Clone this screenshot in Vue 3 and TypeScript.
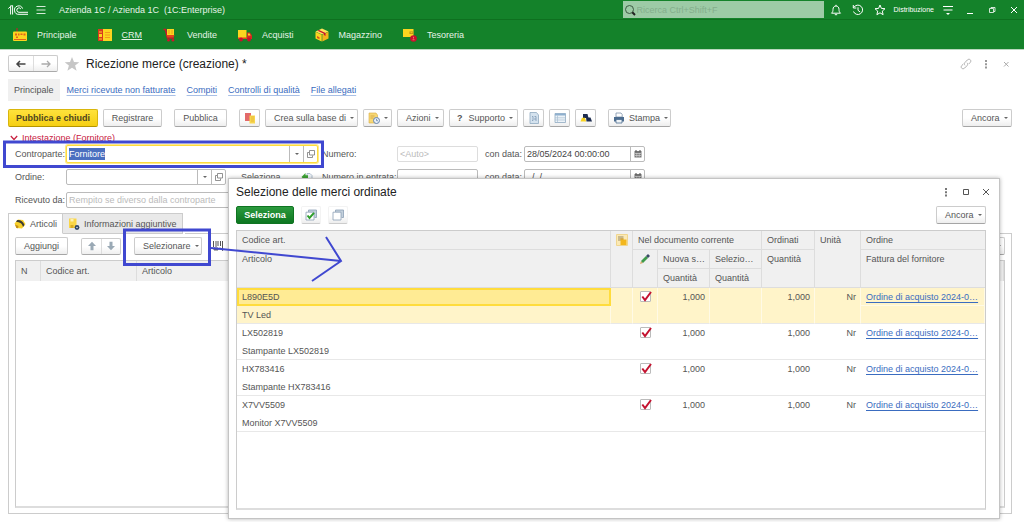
<script setup lang="ts">
import { onMounted, ref } from 'vue'

interface OrderLine {
  code: string
  article: string
  quantity: string
  ordered: string
  unit: string
  order: string
  checked: boolean
}

const lines = ref<OrderLine[]>([
  { code: 'L890E5D', article: 'TV Led', quantity: '1,000', ordered: '1,000', unit: 'Nr', order: 'Ordine di acquisto 2024-0…', checked: true },
  { code: 'LX502819', article: 'Stampante LX502819', quantity: '1,000', ordered: '1,000', unit: 'Nr', order: 'Ordine di acquisto 2024-0…', checked: true },
  { code: 'HX783416', article: 'Stampante HX783416', quantity: '1,000', ordered: '1,000', unit: 'Nr', order: 'Ordine di acquisto 2024-0…', checked: true },
  { code: 'X7VV5509', article: 'Monitor X7VV5509', quantity: '1,000', ordered: '1,000', unit: 'Nr', order: 'Ordine di acquisto 2024-0…', checked: true },
])
const selected = ref(0)

const supplier = ref('Fornitore')
const order = ref('')
const receivedFrom = ref('')
const docNumber = ref('')
const docDate = ref('28/05/2024 00:00:00')
const inNumber = ref('')
const inDate = ref('  /  /')
const search = ref('')
const supplierInput = ref<HTMLInputElement | null>(null)

const related = ['Merci ricevute non fatturate', 'Compiti', 'Controlli di qualità', 'File allegati']

onMounted(() => {
  supplierInput.value?.focus()
  supplierInput.value?.select()
})
</script>

<template>
  <div class="app">
    <header class="topbar">
      <svg class="logo" width="20" height="10" viewBox="0 0 20 10" aria-label="1C">
        <path d="M.3 3.6 2.6 1.4V9.5M2 1.2 4.6.6V9.5M11 9.3H20M11 7.3H20M14.6 3.6A4.2 4.2 0 1 0 11 9.3M12.9 4A2.2 2.2 0 1 0 11 7.3" fill="none" stroke="#fff" stroke-width="1" />
      </svg>
      <button class="bare" aria-label="Menu">
        <svg width="12" height="12" viewBox="0 0 12 12"><path d="M1.500 2.500h9M1.500 6h9M1.500 9.500h9" stroke="#d5ead8" stroke-width="1" /></svg>
      </button>
      <span class="app-title">Azienda 1C / Azienda 1C&nbsp; (1C:Enterprise)</span>
      <label class="search">
        <svg width="12" height="12" viewBox="0 0 12 12"><circle cx="5.500" cy="5.500" r="4" fill="none" stroke="#3c5a42" /><path d="M8.300 8.300 11 11" stroke="#222" stroke-width="2" /></svg>
        <input v-model="search" type="text" placeholder="Ricerca Ctrl+Shift+F" aria-label="Ricerca" />
      </label>
      <div class="tools">
        <div class="session">
          <div class="tools">
            <button class="bare" aria-label="Notifiche">
              <svg width="12" height="12" viewBox="0 0 12 12"><path d="M1.500 9.200h9C9.200 8 9 7 9 5.300 9 3.300 7.800 2 6 2S3 3.300 3 5.300C3 7 2.800 8 1.500 9.200zM6 .8V2M4.800 10.700h2.400" fill="none" stroke="#fff" /></svg>
            </button>
            <button class="bare" aria-label="Cronologia">
              <svg width="12" height="12" viewBox="0 0 12 12"><path d="M1.800 3.500A4.700 4.700 0 1 1 1.500 7.500M1.300 1v3h3M6 3.300V6.300L8.200 8" fill="none" stroke="#fff" /></svg>
            </button>
            <button class="bare" aria-label="Preferiti">
              <svg width="12" height="12" viewBox="0 0 12 12"><path d="M6 1 7.400 4.400 11 4.700 8.300 7.100 9.100 10.700 6 8.800 2.900 10.700 3.700 7.100 1 4.700 4.600 4.400z" fill="none" stroke="#fff" /></svg>
            </button>
          </div>
          <span class="user">Distribuzione</span>
          <button class="bare" aria-label="Impostazioni">
            <svg width="12" height="12" viewBox="0 0 12 12"><path d="M1 2.500h10M1.500 6h9" stroke="#fff" /><path d="M4 9h4L6 11z" fill="#fff" /></svg>
          </button>
        </div>
        <button class="bare" aria-label="Riduci">
          <svg width="12" height="12" viewBox="0 0 12 12"><path d="M3 9.500h6" stroke="#fff" /></svg>
        </button>
        <button class="bare" aria-label="Ripristina">
          <svg width="12" height="12" viewBox="0 0 12 12"><path d="M3.500 4.500h4v4h-4zM5 4V3.500h4v4H8" fill="none" stroke="#fff" stroke-width=".8" /></svg>
        </button>
        <button class="bare" aria-label="Chiudi applicazione">
          <svg width="12" height="12" viewBox="0 0 12 12"><path d="M3 3l6 6M9 3 3 9" stroke="#fff" /></svg>
        </button>
      </div>
    </header>

    <nav class="sections">
      <a href="#">
        <svg width="14" height="14" viewBox="0 0 14 14"><path d="M3.500 0h1v4h-1z" fill="#d3122a" /><rect y="3.500" width="14" height="9.500" rx="1" fill="#fcd51f" /><path d="M2 5.500h2v2H2zM5 5.500h1.500v2H5zM7.500 5.500h2v1.500h-2zM10.500 5.500h2v2h-2zM3 8.500h2V10H3zM1 11h12v1H1z" fill="#e2631c" /></svg>
        <span>Principale</span>
      </a>
      <a href="#">
        <svg width="14" height="14" viewBox="0 0 14 14"><path d="M0 1h14v12H0z" fill="#fcd51f" /><path d="M0 1h5v12H0z" fill="#d9381f" /><path d="M1 3.500h3v1H1zM1 6h3v3H1zM1 10.500h3v1H1z" fill="#fcd51f" /><path d="M7 4h5v1H7zM7 6.500h5v1H7zM7 9h5v1H7z" fill="#f39a1c" /></svg>
        <span class="current">CRM</span>
      </a>
      <a href="#">
        <svg width="14" height="14" viewBox="0 0 14 14"><path d="M.5 1.500h2l2 8.500h6.500" fill="none" stroke="#d3122a" stroke-width="1.500" /><path d="M4 1h7v6H4z" fill="#fcd51f" /><path d="M5.500 2h1v4h-1zM8.500 2h1v4h-1z" fill="#e9a415" /><path d="M3.500 7h8l-1 2.500H4.500z" fill="#e2441c" /><circle cx="5.500" cy="12.200" r="1.300" fill="#d3122a" /><circle cx="10" cy="12.200" r="1.300" fill="#d3122a" /></svg>
        <span>Vendite</span>
      </a>
      <a href="#">
        <svg width="14" height="14" viewBox="0 0 14 14"><path d="M0 2h8.500v8H0z" fill="#fcd51f" /><path d="M9 4.500h3l2 3V11H9z" fill="#d9281f" /><path d="M10 5.500h1.500l1.200 2H10z" fill="#fcd51f" /><path d="M0 9.500h9V11H0z" fill="#e2441c" /><circle cx="3" cy="11.500" r="1.900" fill="#c8102e" /><circle cx="11" cy="11.500" r="1.900" fill="#c8102e" /></svg>
        <span>Acquisti</span>
      </a>
      <a href="#">
        <svg width="14" height="14" viewBox="0 0 14 14"><path d="M7 .5 13.500 3.500 7 6.500.5 3.500z" fill="#ffe35a" /><path d="M.5 3.800 6.700 6.800V13.500L.5 10.500z" fill="#fcd51f" /><path d="M13.500 3.800 7.300 6.800V13.500L13.500 10.500z" fill="#f3b41a" /><path d="M4 2 10.500 5v3L9 7V5.700L2.500 2.700z" fill="#c8102e" /><path d="M2 8l2.500 1.200v2L2 10z" fill="#d9541f" /></svg>
        <span>Magazzino</span>
      </a>
      <a href="#">
        <svg width="14" height="14" viewBox="0 0 14 14"><path d="M0 1h10.500v8H0z" fill="#fcd51f" /><path d="M6.500 3.500h4v2.500h-4z" fill="#b78f17" /><path d="M7.500 4.200h2v1h-2z" fill="#fcd51f" /><circle cx="10.500" cy="10.500" r="3.300" fill="#c8102e" /><path d="M10 8.800h1v1.700h-1zM9.500 11.300h2v1h-2z" fill="#f0705a" /></svg>
        <span>Tesoreria</span>
      </a>
    </nav>

    <main class="page">
      <div class="title-row">
        <div class="segment">
          <button aria-label="Indietro"><svg width="12" height="10" viewBox="0 0 12 10"><path d="M2 5h8.500M5 2 2 5l3 3" fill="none" stroke="#444" stroke-width="1.500" /></svg></button>
          <button aria-label="Avanti"><svg width="12" height="10" viewBox="0 0 12 10"><path d="M1.500 5H10M7 2l3 3-3 3" fill="none" stroke="#aaa" stroke-width="1.300" /></svg></button>
        </div>
        <button class="bare" aria-label="Aggiungi ai preferiti">
          <svg width="16" height="16" viewBox="0 0 16 16"><path d="M8 1 10 6 15.300 6.200 11.100 9.500 12.600 14.800 8 11.800 3.400 14.800 4.900 9.500.7 6.200 6 6z" fill="#c6c6c6" /></svg>
        </button>
        <h1>Ricezione merce (creazione) *</h1>
        <div class="page-tools">
          <button class="bare" aria-label="Collegamento"><svg width="12" height="12" viewBox="0 0 12 12"><path d="M5 7.300C4 6.300 4.200 5.200 5 4.400L7.300 2C8.300 1 9.600 1.100 10.300 1.800 11 2.500 11 3.700 10.100 4.600L8.700 6M7 4.800C8 5.800 7.800 6.900 7 7.700L4.700 10C3.700 11 2.400 10.900 1.700 10.200 1 9.500 1 8.300 1.900 7.400L3.300 6" fill="none" stroke="#b0b0b0" /></svg></button>
          <button class="bare" aria-label="Altro"><svg width="12" height="12" viewBox="0 0 12 12"><path d="M5 2h2v2H5zM5 5.200h2v2H5zM5 8.400h2v2H5z" fill="#999" /></svg></button>
          <button class="bare" aria-label="Chiudi pagina"><svg width="12" height="12" viewBox="0 0 12 12"><path d="M4 4l4.500 4.500M8.500 4 4 8.500" stroke="#aaa" /></svg></button>
        </div>
      </div>

      <div class="related">
        <span class="related-current">Principale</span>
        <a v-for="item in related" :key="item" href="#">{{ item }}</a>
      </div>

      <div class="commands">
        <button class="btn primary w-xl">Pubblica e chiudi</button>
        <button class="btn w-m">Registrare</button>
        <span class="space"></span>
        <button class="btn w-s">Pubblica</button>
        <span class="space"></span>
        <button class="btn icon" aria-label="Movimenti">
          <svg width="12" height="12" viewBox="0 0 12 12"><path d="M1 1h6v8H1z" fill="#e36a6a" /><path d="M5.500 3.500h5.500v8H5.500z" fill="#f8d64e" /><path d="M7 5h3M7 7h3M7 9h3" stroke="#e7b93a" /></svg>
        </button>
        <button class="btn drop w-c">Crea sulla base di<i class="caret"></i></button>
        <button class="btn drop w-i" aria-label="Promemoria">
          <svg width="12" height="12" viewBox="0 0 12 12"><path d="M1 1h7l1.500 2v8H1z" fill="#f7d774" stroke="#d8ad45" stroke-width=".6" /><path d="M2.500 4h4M2.500 6h3" stroke="#c99a3a" stroke-width=".7" /><circle cx="8.500" cy="8.500" r="3" fill="#e6eef8" stroke="#6584ad" /><path d="M8.500 6.800v1.900H10" fill="none" stroke="#6584ad" stroke-width=".8" /></svg>
          <i class="caret"></i>
        </button>
        <button class="btn drop w-a">Azioni<i class="caret"></i></button>
        <button class="btn drop w-l"><b>?</b>Supporto<i class="caret"></i></button>
        <button class="btn icon" aria-label="Documento">
          <svg width="12" height="12" viewBox="0 0 12 12"><path d="M2 .5h6.500L10.500 3v8.500H2z" fill="#d4e2ee" stroke="#8fa9c0" stroke-width=".8" /><path d="M4 4.500h1v4H4M6.500 4.500h1.500V9M6 7h2" fill="none" stroke="#7f9ab5" stroke-width=".8" /></svg>
        </button>
        <button class="btn icon" aria-label="Elenco">
          <svg width="12" height="12" viewBox="0 0 12 12"><path d="M1 1.500h10.500v9H1z" fill="#edf3f8" stroke="#8fa9c0" stroke-width=".8" /><path d="M1 1.500h10.500v2H1z" fill="#8fb0cf" /><path d="M3.500 3.500v7M1 5.800h10.500M1 8h10.500" stroke="#a9bfd2" stroke-width=".7" /></svg>
        </button>
        <button class="btn icon" aria-label="Struttura">
          <svg width="12" height="12" viewBox="0 0 12 12"><path d="M3 2h4.500L8.500 6H3z" fill="#1d2c4f" /><path d="M.5 9.500 2 5.800h3L6.200 9.500z" fill="#f8d321" /><path d="M6 5.500h4.500L12 9.500H6.500z" fill="#1d2c4f" /></svg>
        </button>
        <span class="space"></span>
        <button class="btn drop w-p">
          <svg width="12" height="12" viewBox="0 0 12 12"><path d="M3 1h5l1.200 1.500V5H3z" fill="#fff" stroke="#7d93aa" stroke-width=".8" /><path d="M1 5h10v4.500H1z" fill="#4d6d90" /><path d="M3 7.500h6v3.500H3z" fill="#eef3f7" stroke="#4d6d90" stroke-width=".8" /></svg>
          Stampa<i class="caret"></i>
        </button>
        <button class="btn drop w-n push">Ancora<i class="caret"></i></button>
      </div>

      <h2 class="group-title">
        <svg width="8" height="6" viewBox="0 0 8 6"><path d="M.8 1 4 4.500 7.200 1" fill="none" stroke="#c8203f" stroke-width="1.200" /></svg>
        Intestazione (Fornitore)
      </h2>

      <div class="form">
        <label for="supplier">Controparte:</label>
        <div class="field focused">
          <input id="supplier" ref="supplierInput" v-model="supplier" type="text" />
          <button aria-label="Scegli controparte"><i class="caret"></i></button>
          <button aria-label="Apri controparte"><svg width="8" height="8" viewBox="0 0 8 8"><path d="M2.500.5h5v4.500h-5zM2 2.500H.5v5h5V5.500" fill="none" stroke="#777" stroke-width=".8" /></svg></button>
        </div>
        <label for="number">Numero:</label>
        <div class="field faint"><input id="number" v-model="docNumber" type="text" placeholder="&lt;Auto&gt;" /></div>
        <label for="date">con data:</label>
        <div class="field">
          <input id="date" v-model="docDate" type="text" />
          <button aria-label="Calendario"><svg width="8" height="8" viewBox="0 0 8 8"><path d="M.5 1h7v6.500h-7z" fill="#777" /><path d="M1 3.500h6M1 5.500h6M2.800 3v4M5.200 3v4" stroke="#ddd" stroke-width=".6" /><path d="M2 0v1.500M6 0v1.500" stroke="#444" /></svg></button>
        </div>

        <label for="order">Ordine:</label>
        <div class="order-cell">
          <div class="field order">
            <input id="order" v-model="order" type="text" />
            <button aria-label="Scegli ordine"><i class="caret"></i></button>
            <button aria-label="Apri ordine"><svg width="8" height="8" viewBox="0 0 8 8"><path d="M2.500.5h5v4.500h-5zM2 2.500H.5v5h5V5.500" fill="none" stroke="#777" stroke-width=".8" /></svg></button>
          </div>
          <button class="bare">Seleziona</button>
          <button class="bare push" aria-label="Compila"><svg width="12" height="12" viewBox="0 0 12 12"><path d="M6 2.500h3l2 2V11H6z" fill="#eef3f8" stroke="#9db0c4" stroke-width=".8" /><path d="M.5 6 4.500 2v2.200H7v3.500H4.500V10z" fill="#3fa535" /></svg></button>
        </div>
        <label for="in-number">Numero in entrata:</label>
        <div class="field"><input id="in-number" v-model="inNumber" type="text" /></div>
        <label for="in-date">con data:</label>
        <div class="field">
          <input id="in-date" v-model="inDate" type="text" />
          <button aria-label="Calendario entrata"><svg width="8" height="8" viewBox="0 0 8 8"><path d="M.5 1h7v6.500h-7z" fill="#777" /><path d="M1 3.500h6M1 5.500h6M2.800 3v4M5.200 3v4" stroke="#ddd" stroke-width=".6" /><path d="M2 0v1.500M6 0v1.500" stroke="#444" /></svg></button>
        </div>

        <label for="received">Ricevuto da:</label>
        <div class="field wide"><input id="received" v-model="receivedFrom" type="text" placeholder="Rempito se diverso dalla controparte" /></div>
      </div>

      <div class="tabs" role="tablist">
        <button class="tab active" role="tab" aria-selected="true">
          <svg width="12" height="12" viewBox="0 0 12 12"><path d="M.5 5.500 4 1.500 9 2l2.500 4L8 10.500 2.500 10z" fill="#f8d02c" /><path d="M3 2.300C5.500 1.500 9 3 10.500 7L9 9C8.500 6 6 4 2 3.800z" fill="#3d3d33" /><path d="M1 6.500 4.500 8 4 10.200 2.300 10z" fill="#c38f1a" /></svg>
          Articoli
        </button>
        <button class="tab" role="tab" aria-selected="false">
          <svg width="12" height="12" viewBox="0 0 12 12"><path d="M1 .5h7.500v9.500H1z" fill="#fad648" /><path d="M2.500 1h3v2.500h-3z" fill="#fdf0b2" /><path d="M2.500 7h3v3h-3z" fill="#d9ab24" /><circle cx="9" cy="9.500" r="2.400" fill="#2f4668" /><circle cx="9" cy="9.500" r=".8" fill="#dfe7f0" /></svg>
          Informazioni aggiuntive
        </button>
      </div>

      <section class="panel">
        <div class="panel-tools">
          <button class="btn w-g">Aggiungi</button>
          <div class="segment moves">
            <button aria-label="Sposta su"><svg width="10" height="10" viewBox="0 0 10 10"><path d="M5 .8 9 5H6.500v4.200h-3V5H1z" fill="#9aa9b5" /></svg></button>
            <button aria-label="Sposta giù"><svg width="10" height="10" viewBox="0 0 10 10"><path d="M5 9.200 9 5H6.500V.8h-3V5H1z" fill="#9aa9b5" /></svg></button>
          </div>
          <button class="btn drop w-k">Selezionare<i class="caret"></i></button>
          <button class="bare" aria-label="Codice a barre"><svg width="12" height="12" viewBox="0 0 12 12"><path d="M1.500 1v6M4 1v6M6 1v5M8.500 1v5M10.500 1v8" stroke="#555" /><path d="M2 8h4v2H2zM8 7.500l3 3.500" fill="#666" stroke="#666" /></svg></button>
          <button class="btn drop w-n push">Ancora<i class="caret"></i></button>
        </div>
        <div class="grid-box">
          <table class="items">
            <colgroup><col class="c-n" /><col class="c-code" /><col /></colgroup>
            <thead><tr><th>N</th><th>Codice art.</th><th>Articolo</th></tr></thead>
          </table>
        </div>
      </section>
    </main>

    <section class="dialog" role="dialog" aria-labelledby="dialog-title">
      <div class="dialog-head">
        <h2 id="dialog-title">Selezione delle merci ordinate</h2>
        <div class="dialog-tools">
          <button class="bare" aria-label="Altre azioni"><svg width="12" height="12" viewBox="0 0 12 12"><path d="M5 2h2v2H5zM5 5.200h2v2H5zM5 8.400h2v2H5z" fill="#777" /></svg></button>
          <button class="bare" aria-label="Ingrandisci"><svg width="12" height="12" viewBox="0 0 12 12"><path d="M3.500 3.500h5v5h-5z" fill="none" stroke="#555" /></svg></button>
          <button class="bare" aria-label="Chiudi"><svg width="12" height="12" viewBox="0 0 12 12"><path d="M3 3l6 6M9 3 3 9" stroke="#555" /></svg></button>
        </div>
      </div>
      <div class="dialog-commands">
        <button class="btn confirm">Seleziona</button>
        <button class="btn flat" aria-label="Seleziona tutto"><svg width="12" height="12" viewBox="0 0 12 12"><path d="M3.500 3V1h8v7.500H9.500" fill="#c3d0dc" stroke="#8ba0b5" stroke-width=".8" /><path d="M1 3.200h8V11H1z" fill="#fff" stroke="#8ba0b5" stroke-width=".8" /><path d="M2.500 6.500 4.500 9 9 3.800" fill="none" stroke="#2f9e2c" stroke-width="2" /></svg></button>
        <button class="btn flat" aria-label="Deseleziona tutto"><svg width="12" height="12" viewBox="0 0 12 12"><path d="M3.500 3V1h8v7.500H9.500" fill="#c3d0dc" stroke="#8ba0b5" stroke-width=".8" /><path d="M1 3.200h8V11H1z" fill="#fff" stroke="#8ba0b5" stroke-width=".8" /></svg></button>
        <button class="btn drop w-n push">Ancora<i class="caret"></i></button>
      </div>
      <div class="grid-box">
        <table class="orders">
          <colgroup>
            <col /><col class="c-flag" /><col class="c-check" /><col class="c-qty" /><col class="c-qty" /><col class="c-ordered" /><col class="c-unit" /><col class="c-order" />
          </colgroup>
          <thead>
            <tr>
              <th>Codice art.</th>
              <th rowspan="3" class="glyph"><svg width="12" height="12" viewBox="0 0 12 12"><path d="M.5.500h11v11H.5z" fill="#fbe9b5" stroke="#f0d68e" /><path d="M2 2h5.500v5H2z" fill="#c9b98e" /><path d="M4.500 5.500h6V11h-6z" fill="#f3b71d" /><path d="M4.500 4.500h3v1h-3z" fill="#d99f15" /></svg></th>
              <th colspan="3">Nel documento corrente</th>
              <th>Ordinati</th>
              <th rowspan="3">Unità</th>
              <th>Ordine</th>
            </tr>
            <tr>
              <th rowspan="2">Articolo</th>
              <th rowspan="2" class="glyph"><svg width="12" height="12" viewBox="0 0 12 12"><path d="M1 11 2 8 4 10z" fill="#d9a56a" /><path d="M2 8 7 3l2 2-5 5z" fill="#3f9a4a" /><path d="M7 3 9 1l2 2-2 2z" fill="#3b4a66" /></svg></th>
              <th>Nuova s…</th>
              <th>Selezio…</th>
              <th rowspan="2">Quantità</th>
              <th rowspan="2">Fattura del fornitore</th>
            </tr>
            <tr><th>Quantità</th><th>Quantità</th></tr>
          </thead>
          <tbody v-for="(line, index) in lines" :key="line.code" :class="{ selected: index === selected }" @click="selected = index">
            <tr>
              <td class="code">{{ line.code }}</td>
              <td rowspan="2"></td>
              <td rowspan="2" class="glyph">
                <label class="check">
                  <input v-model="line.checked" type="checkbox" :aria-label="line.code" />
                  <svg v-if="line.checked" width="12" height="12" viewBox="0 0 12 12"><path d="M2.300 5.500 5 9 11 1" fill="none" stroke="#c4122f" stroke-width="2" /></svg>
                </label>
              </td>
              <td rowspan="2" class="num">{{ line.quantity }}</td>
              <td rowspan="2"></td>
              <td rowspan="2" class="num">{{ line.ordered }}</td>
              <td rowspan="2" class="num">{{ line.unit }}</td>
              <td class="link"><a href="#">{{ line.order }}</a></td>
            </tr>
            <tr class="second">
              <td>{{ line.article }}</td>
              <td></td>
            </tr>
          </tbody>
        </table>
      </div>
    </section>

    <svg class="marks" width="350" height="290" viewBox="0 0 350 290" fill="none" stroke="#4048d0" aria-hidden="true">
      <path d="M4.500 142h318v24.500H4.500z" stroke-width="3" />
      <path d="M124.500 230h85v34.500h-85z" stroke-width="3" />
      <path d="M211 248 341 261M326 237 341 261 312 281" stroke-width="2" />
    </svg>
  </div>
</template>

<style>
html,
body {
  margin: 0;
  background: #fff;
}
</style>

<style scoped>
.app,
.app * {
  box-sizing: border-box;
}
.app {
  position: relative;
  display: flex;
  flex-direction: column;
  min-height: 100vh;
  font: 9px/12px "Liberation Sans", Arial, sans-serif;
  color: #555;
}
svg {
  display: block;
  flex: none;
}
button,
input {
  font: inherit;
  color: inherit;
}
h1,
h2 {
  margin: 0;
  font-size: 12px;
  line-height: 16px;
  font-weight: 400;
  color: #222;
}
.bare {
  padding: 0;
  border: 0;
  background: none;
}
.push {
  margin-left: auto;
}
.caret {
  width: 0;
  height: 0;
  border: 2px solid transparent;
  border-top-color: #666;
  border-bottom: 0;
}

.topbar {
  display: flex;
  align-items: center;
  height: 20px;
  padding: 0 4px 0 8px;
  background: #14822a;
  border-bottom: 1px solid #0e701f;
  color: #fff;
}
.topbar .logo {
  margin-right: 7px;
}
.app-title {
  margin-left: 12px;
  color: #e6f3e8;
}
.search {
  display: flex;
  align-items: center;
  gap: 1px;
  width: 201px;
  height: 17px;
  margin: 0 6px 0 auto;
  padding-left: 1px;
  background: #9dcba6;
}
.search input {
  flex: 1;
  min-width: 0;
  padding: 0;
  border: 0;
  outline: 0;
  background: none;
}
.search input::placeholder {
  color: #84ae8c;
}
.tools {
  display: flex;
  align-items: center;
  gap: 10px;
}
.session {
  display: flex;
  align-items: center;
  gap: 8px;
}
.user {
  font-size: 7px;
}
.sections {
  display: flex;
  align-items: center;
  gap: 21px;
  height: 30px;
  padding: 0 13px;
  background: #14822a;
  border-bottom: 1px solid #b9d8be;
}
.sections a {
  display: flex;
  align-items: center;
  gap: 10px;
  color: #e6f3e8;
  text-decoration: none;
}
.sections .current {
  text-decoration: underline;
}

.page {
  flex: 1;
  display: flex;
  flex-direction: column;
  padding: 5px 12px 8px 8px;
}
.title-row {
  display: flex;
  align-items: center;
  gap: 6px;
  height: 17px;
}
.page-tools {
  display: flex;
  gap: 8px;
  margin-left: auto;
}
.segment {
  display: flex;
  height: 17px;
  border: 1px solid #ccc;
  border-bottom-color: #aaa;
  border-radius: 2px;
  background: linear-gradient(#fff 50%, #efefef);
}
.segment button {
  display: grid;
  place-items: center;
  width: 24px;
  padding: 0;
  border: 0;
  background: none;
}
.segment button + button {
  border-left: 1px solid #ddd;
}
.related {
  display: flex;
  align-items: center;
  gap: 11px;
  margin-top: 7px;
}
.related-current {
  padding: 5px 6px;
  margin-right: -4px;
  background: #f0f0f0;
}
.related a,
.orders a {
  color: #3a6cc0;
  text-underline-offset: 2px;
}
.related a {
  text-decoration-color: #a9c0e6;
}
.commands {
  display: flex;
  align-items: center;
  gap: 5px;
  margin-top: 8px;
}
.space {
  width: 2px;
}
.btn {
  display: flex;
  align-items: center;
  justify-content: center;
  gap: 6px;
  height: 18px;
  padding: 0;
  border: 1px solid #ccc;
  border-bottom-color: #a5a5a5;
  border-radius: 2px;
  background: linear-gradient(#fff 50%, #eee);
  white-space: nowrap;
}
.btn b {
  margin-right: 2px;
}
.drop {
  justify-content: space-between;
  gap: 4px;
  padding: 0 4px 0 8px;
}
.primary {
  border-color: #d9b60c;
  border-bottom-color: #b59500;
  background: linear-gradient(#ffe23c, #f5cf14);
  font-weight: 700;
  color: #4d4420;
}
.icon { width: 21px; }
.w-xl { width: 90px; }
.w-c { width: 93px; }
.w-m { width: 59px; }
.w-s { width: 53px; }
.w-i { width: 29px; padding-left: 4px; }
.w-a { width: 47px; }
.w-l { width: 69px; padding-left: 7px; }
.w-p { width: 63px; padding-left: 4px; }
.w-n { width: 50px; }
.w-g { width: 53px; }
.w-k { width: 68px; }

.group-title {
  display: flex;
  align-items: center;
  gap: 4px;
  margin: 5px 0 0 2px;
  font-size: 9px;
  line-height: 12px;
  color: #c8203f;
}
.form {
  display: grid;
  grid-template-columns: 51px 252px 79px 81px 46px 121px;
  grid-auto-rows: 16px;
  align-items: center;
  row-gap: 7px;
  margin: 2px 0 0 7px;
}
.form label {
  white-space: nowrap;
}
.form > label:nth-of-type(3n + 2) {
  padding-left: 4px;
}
.form > label:nth-of-type(3n) {
  padding-left: 7px;
}
.field {
  display: flex;
  height: 16px;
  border: 1px solid #bbb;
  border-radius: 2px;
  background: #fff;
}
.field.faint {
  border-color: #ddd;
}
.field.focused {
  height: 18px;
  border: 1px solid #ffdc3c;
  box-shadow: 0 0 0 1px #ffe98a;
}
.field.wide {
  grid-column: 2 / -1;
}
.field input {
  flex: 1;
  width: 0;
  padding: 0 2px;
  border: 0;
  outline: 0;
  background: none;
  color: #444;
}
.field input::placeholder {
  color: #bbb;
}
.field input::selection {
  background: #4a6fc0;
  color: #fff;
}
.field button {
  display: grid;
  place-items: center;
  width: 14px;
  padding: 0;
  border: 0;
  border-left: 1px solid #bbb;
  background: none;
}
.order-cell {
  display: flex;
  align-items: center;
  padding-right: 5px;
}
.order-cell .order {
  width: 160px;
  margin-right: 15px;
}

.tabs {
  display: flex;
  margin-top: 5px;
}
.tab {
  display: flex;
  align-items: center;
  gap: 4px;
  height: 21px;
  padding: 0 5px;
  border: 1px solid #ccc;
  border-left: 0;
  background: #e9e9e9;
  white-space: nowrap;
}
.tab.active {
  border-left: 1px solid #ccc;
  border-bottom-color: #fff;
  background: #fff;
}
.panel {
  flex: 1;
  display: flex;
  flex-direction: column;
  gap: 5px;
  margin-top: -1px;
  padding: 4px 6px 5px;
  border: 1px solid #ccc;
  border-top: 0;
  background: linear-gradient(#ccc, #ccc) right top / calc(100% - 176px) 1px no-repeat;
}
.panel-tools {
  display: flex;
  align-items: center;
  gap: 13px;
}
.panel-tools .bare {
  margin-left: -3px;
}
.moves button {
  width: 19px;
}
.grid-box {
  flex: 1;
  border: 1px solid #ccc;
  border-bottom: 2px solid #ddd;
  background: #fff;
}
table {
  width: 100%;
  table-layout: fixed;
  border-collapse: separate;
  border-spacing: 0;
}
th {
  font-weight: 400;
  text-align: left;
  background: #f0f0f0;
}
.items th {
  height: 20px;
  padding: 0 5px;
  border-right: 1px solid #ddd;
}
.c-n { width: 25px; }
.c-code { width: 96px; }

.dialog {
  position: absolute;
  top: 178px;
  right: 24px;
  bottom: 3px;
  left: 228px;
  display: flex;
  flex-direction: column;
  padding: 5px 13px 8px 7px;
  border: 1px solid #c4c4c4;
  background: #fff;
  box-shadow: 0 0 4px rgba(0, 0, 0, 0.3);
}
.dialog-head {
  display: flex;
  align-items: center;
  justify-content: space-between;
}
.dialog-tools {
  display: flex;
  gap: 8px;
  margin-right: -6px;
}
.dialog-commands {
  display: flex;
  align-items: center;
  gap: 7px;
  margin: 6px 0;
}
.confirm {
  width: 58px;
  border-color: #0f7421;
  background: linear-gradient(#2c9a3e, #0d7620);
  color: #fff;
  font-weight: 700;
}
.flat {
  width: 20px;
  border-color: #f3f3f3;
  border-bottom-color: #ccc;
}
.orders th {
  height: 19px;
  padding: 3px 5px;
  border-right: 1px solid #ddd;
  border-bottom: 1px solid #ddd;
  vertical-align: top;
  white-space: nowrap;
}
.orders tr:first-child th:last-child,
.orders tr:nth-child(2) th:last-child {
  border-right: 0;
}
.orders td {
  height: 18px;
  padding: 3px 5px;
  vertical-align: top;
  white-space: nowrap;
}
.orders .second td {
  padding-bottom: 2px;
}
.orders td[rowspan],
.orders .second td {
  border-bottom: 1px solid #e8e8e8;
}
.orders .num {
  text-align: right;
}
.orders .glyph {
  padding: 3px 0;
}
.orders .glyph > svg {
  margin: 0 auto;
}
.selected td {
  background: #fff4c9;
  border-right: 1px solid #fffae6;
}
.orders .selected .num {
  padding-right: 4px;
}
.orders .selected .glyph {
  padding-left: 1px;
}
.orders .selected .link {
  padding-bottom: 2px;
  border-bottom: 1px solid #fffae6;
}
.orders .selected .code {
  padding: 1px 4px 1px 3px;
  border: 2px solid #ffdc3c;
  background: #ffeb94;
}
.c-flag { width: 22px; }
.c-check { width: 25px; }
.c-qty { width: 52px; }
.c-ordered { width: 53px; }
.c-unit { width: 46px; }
.c-order { width: 124px; }
.check {
  display: grid;
  justify-content: center;
}
.check > * {
  grid-area: 1 / 1;
}
.check input {
  width: 11px;
  height: 11px;
  margin: 0;
  appearance: none;
  border: 1px solid #bbb;
  border-radius: 1px;
  background: #fff;
}
.check svg {
  pointer-events: none;
}
.marks {
  position: absolute;
  top: 0;
  left: 0;
  pointer-events: none;
}
</style>
